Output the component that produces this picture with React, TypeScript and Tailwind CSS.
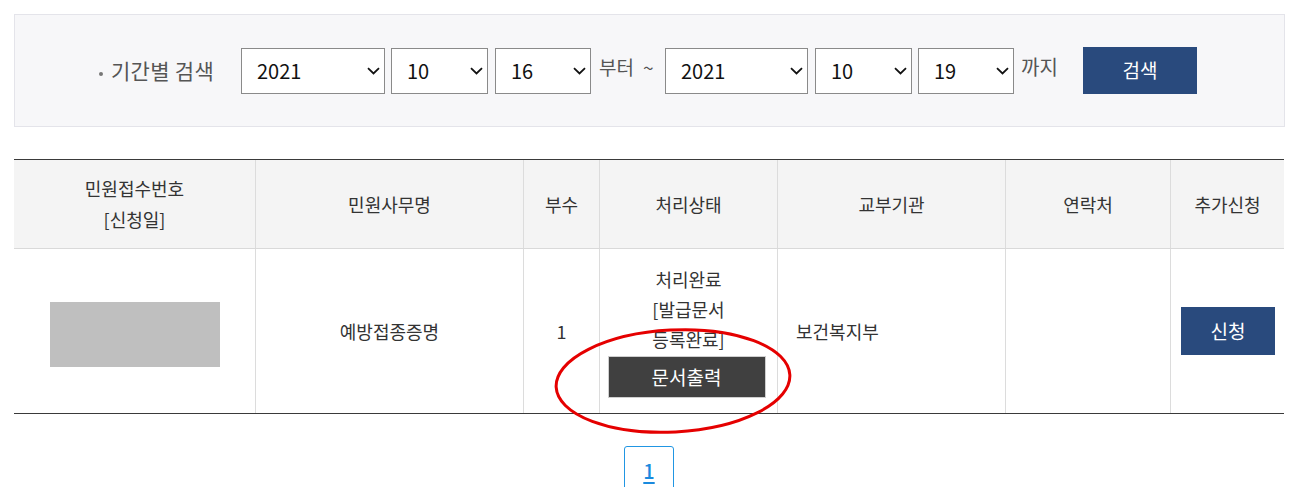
import React from "react";

const Chevron = () => (
  <svg
    className="pointer-events-none absolute right-[4px] top-1/2 -translate-y-1/2"
    width="13"
    height="8"
    viewBox="0 0 13 8"
  >
    <path d="M1 1.2 L6.5 6.5 L12 1.2" fill="none" stroke="#111" strokeWidth="1.8" />
  </svg>
);

function Sel({ value, w }: { value: string; w: string }) {
  return (
    <div className={`relative h-[46px] ${w} shrink-0 border border-[#8a8a8a] bg-white`}>
      <div className="flex h-full items-center pl-[15px] text-[20px] text-[#111] leading-none">{value}</div>
      <Chevron />
    </div>
  );
}

export default function App() {
  return (
    <div className="relative h-[487px] w-[1308px] overflow-hidden bg-white px-[14px] pt-[14px] font-['Noto_Sans_CJK_KR','Noto_Sans',sans-serif] text-[#333]">
      {/* search box */}
      <div className="flex h-[113px] w-[1271px] items-center border border-[#e4e4ea] bg-[#f7f7f9] pl-[84px]">
        <span className="mt-[6px] h-[4px] w-[4px] shrink-0 rounded-full bg-[#777]" />
        <span className="ml-[8px] w-[109px] shrink-0 whitespace-nowrap text-[21px] tracking-[0.3px] text-[#555]">기간별 검색</span>
        <div className="ml-[21px]">
          <Sel value="2021" w="w-[144px]" />
        </div>
        <div className="ml-[6px]">
          <Sel value="10" w="w-[97px]" />
        </div>
        <div className="ml-[7px]">
          <Sel value="16" w="w-[96px]" />
        </div>
        <span className="mb-[6px] ml-[8px] flex w-[59px] shrink-0 items-center whitespace-nowrap text-[19px] text-[#555]">
          <span>부터</span>
          <span className="ml-[9px]">~</span>
        </span>
        <div className="ml-[7px]">
          <Sel value="2021" w="w-[143px]" />
        </div>
        <div className="ml-[7px]">
          <Sel value="10" w="w-[97px]" />
        </div>
        <div className="ml-[6px]">
          <Sel value="19" w="w-[96px]" />
        </div>
        <span className="mb-[8px] ml-[7px] w-[40px] shrink-0 whitespace-nowrap text-[20px] text-[#555]">까지</span>
        <button className="ml-[22px] h-[47px] w-[114px] shrink-0 bg-[#294a7d] text-[19px] text-white">검색</button>
      </div>

      {/* table */}
      <div className="mt-[32px] w-[1270px]">
        <div className="grid h-[90px] grid-cols-[241px_268px_76px_178px_228px_165px_114px] border-t border-b border-t-[#3a3a3a] border-b-[#d9d9d9] bg-[#f4f4f4] text-[18px] leading-[31px] text-[#333]">
          <div className="flex flex-col items-center justify-center text-center">
            <span>민원접수번호</span>
            <span>[신청일]</span>
          </div>
          <div className="flex items-center justify-center border-l border-[#dcdcdc]">민원사무명</div>
          <div className="flex items-center justify-center border-l border-[#dcdcdc]">부수</div>
          <div className="flex items-center justify-center border-l border-[#dcdcdc]">처리상태</div>
          <div className="flex items-center justify-center border-l border-[#dcdcdc]">교부기관</div>
          <div className="flex items-center justify-center border-l border-[#dcdcdc]">연락처</div>
          <div className="flex items-center justify-center border-l border-[#dcdcdc]">추가신청</div>
        </div>
        <div className="grid h-[165px] grid-cols-[241px_268px_76px_178px_228px_165px_114px] border-b border-[#3a3a3a] text-[18px] text-[#333]">
          <div className="flex items-center justify-center">
            <div className="mt-[7px] h-[65px] w-[170px] bg-[#bfbfbf]" />
          </div>
          <div className="flex items-center justify-center border-l border-[#dcdcdc]">예방접종증명</div>
          <div className="flex items-center justify-center border-l border-[#dcdcdc]">1</div>
          <div className="flex flex-col items-center justify-center border-l border-[#dcdcdc] text-center leading-[30px]">
            <span>처리완료</span>
            <span>[발급문서</span>
            <span>등록완료]</span>
            <button className="mr-[4px] mt-[2px] h-[42px] w-[158px] border border-[#cfcfcf] bg-[#404040] text-[19px] text-white">
              문서출력
            </button>
          </div>
          <div className="flex items-center border-l border-[#dcdcdc] pl-[18px]">보건복지부</div>
          <div className="border-l border-[#dcdcdc]" />
          <div className="flex items-center justify-center border-l border-[#dcdcdc]">
            <button className="ml-[1px] h-[48px] w-[94px] bg-[#294a7d] text-[19px] text-white">신청</button>
          </div>
        </div>
      </div>

      {/* pagination */}
      <div className="mt-[32px] flex w-[1270px] justify-center">
        <div className="flex h-[50px] w-[50px] items-center justify-center rounded-[3px] border border-[#2196e3] text-[20px] font-medium text-[#1a8ade] underline underline-offset-[3px]">
          1
        </div>
      </div>

      {/* red annotation ellipse */}
      <svg className="pointer-events-none absolute left-0 top-0" width="1308" height="487">
        <ellipse
          cx="673"
          cy="381"
          rx="117"
          ry="51"
          fill="none"
          stroke="#e50000"
          strokeWidth="3"
          transform="rotate(-3 673 381)"
        />
      </svg>
    </div>
  );
}
